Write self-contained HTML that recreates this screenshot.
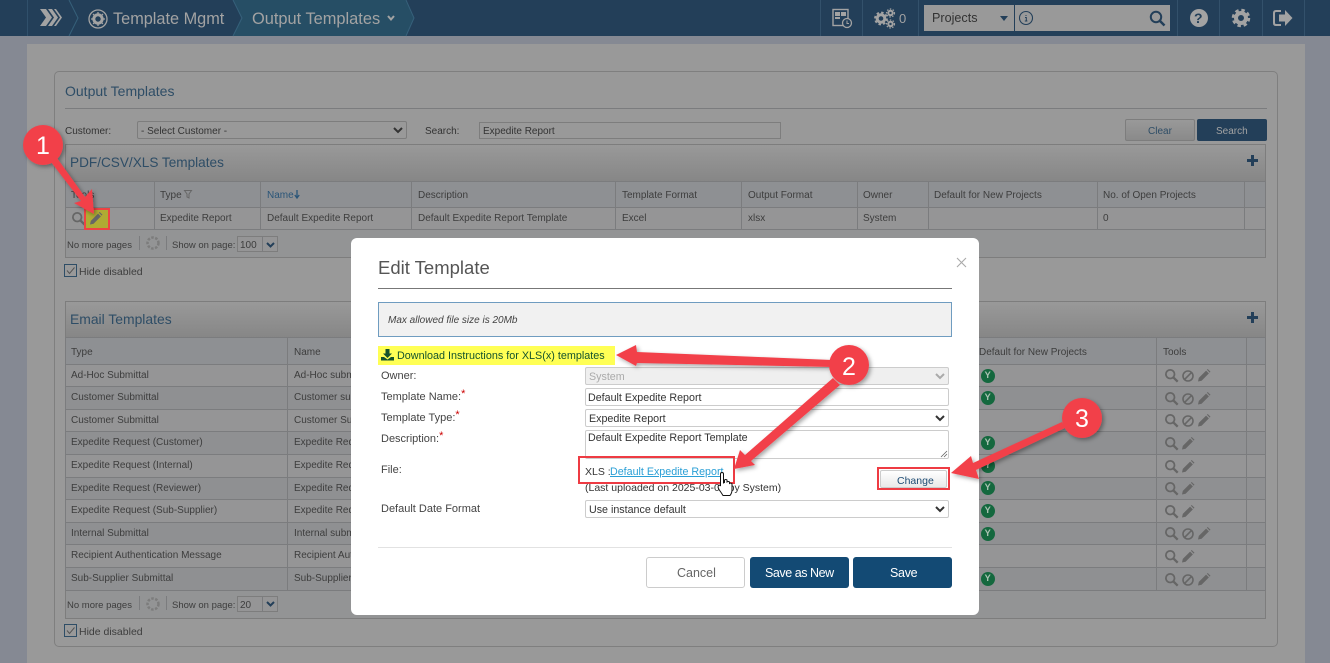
<!DOCTYPE html>
<html><head><meta charset="utf-8">
<style>
html,body{margin:0;padding:0}
body{width:1330px;height:663px;overflow:hidden;position:relative;background:#858993;font-family:"Liberation Sans",sans-serif;font-size:10px;color:#3d3d3d}
div,i,b,span.a{position:absolute;display:block;box-sizing:border-box}
i,b{font-style:normal;font-weight:normal;white-space:nowrap;line-height:14px;height:14px;margin-top:1px}
.l{background:#7b7c7e}
.m{font-size:11px;color:#444}
.inp{background:#fff;border:1px solid #ccc;border-radius:2px;font-size:10.700px;color:#333;line-height:18px;padding-left:2px;white-space:nowrap}
svg{position:absolute;overflow:visible}
</style></head><body>
<svg width="0" height="0" style="position:absolute"><defs>
<g id="mag"><circle cx="5.200" cy="5.200" r="4.300" fill="none" stroke="#666" stroke-width="1.800"/><path d="M8.400 8.400l4.300 4.300" stroke="#666" stroke-width="2.300"/></g>
<g id="ban"><circle cx="6" cy="6" r="5" fill="none" stroke="#666" stroke-width="1.600"/><path d="M2.600 9.400L9.400 2.600" stroke="#666" stroke-width="1.600"/></g>
<g id="pen"><path d="M0 12.500l.8-3.600 7.300-7.300 2.800 2.800-7.300 7.300zM8.900 .8l.8-.8 2.800 2.700-.8 .9z" fill="#666"/></g>
<g id="yb"><circle cx="7" cy="7" r="7" fill="#14683e"/></g>
<g id="caret"><path d="M1 1l4 4 4-4" fill="none" stroke="#333" stroke-width="2"/></g>
</defs></svg>

<!-- nav -->
<div style="left:0;top:0;width:1330px;height:36px;background:#233f59"></div>
<svg style="left:0;top:0" width="1330" height="36">
<polygon points="233,0 406,0 414,18 406,36 233,36 241,18" fill="#264e65"/>
<path d="M27.500 0V36" stroke="#30506b"/>
<path d="M69 0l9 18-9 18M233 0l9 18-9 18M406 0l8 18-8 18" fill="none" stroke="#36607a"/>
<path d="M40 9h6l6 8.500-6 8.500h-6l6-8.500zM48 9h4l6 8.500-6 8.500h-4l6-8.500zM54 9h2l6 8.500-6 8.500h-2l6-8.500z" fill="#a3a3a3"/>
<circle cx="98" cy="19" r="9" fill="none" stroke="#a3a3a3" stroke-width="1.300"/>
<circle cx="98" cy="19" r="4.200" fill="none" stroke="#a3a3a3" stroke-width="3"/>
<path d="M98 12v14M91 19h14M93 14l10 10M103 14l-10 10" stroke="#a3a3a3" stroke-width="1.300" stroke-dasharray="2 10"/>
<path d="M394 16l-3 3.500-3-3.500" fill="none" stroke="#a3a3a3" stroke-width="2"/>
<path d="M820.500 0V36M862.500 0V36M918.500 0V36M1177.500 0V36M1219.500 0V36M1262.500 0V36M1304.500 0V36" stroke="#33516b"/>
<rect x="833" y="9.500" width="15" height="16" fill="none" stroke="#a3a3a3" stroke-width="1.400"/>
<path d="M835 12h5v4h-5zM841 12h5v4h-5zM835 17h5v2h-5z" fill="#a3a3a3"/>
<circle cx="847" cy="23" r="4.500" fill="#233f59" stroke="#a3a3a3" stroke-width="1.300"/>
<path d="M847 20.500V23.500h2" fill="none" stroke="#a3a3a3"/>
<circle cx="881" cy="18.500" r="3.800" fill="none" stroke="#a3a3a3" stroke-width="3"/>
<circle cx="881" cy="18.500" r="6" fill="none" stroke="#a3a3a3" stroke-width="1.800" stroke-dasharray="2.500 2.200"/>
<circle cx="890.500" cy="13" r="2.200" fill="none" stroke="#a3a3a3" stroke-width="2"/>
<circle cx="890.500" cy="24" r="2.200" fill="none" stroke="#a3a3a3" stroke-width="2"/>
<circle cx="890.500" cy="13" r="4" fill="none" stroke="#a3a3a3" stroke-width="1.200" stroke-dasharray="1.500 1.500"/>
<circle cx="890.500" cy="24" r="4" fill="none" stroke="#a3a3a3" stroke-width="1.200" stroke-dasharray="1.500 1.500"/>
<circle cx="1199" cy="18" r="9" fill="#a3a3a3"/>
<circle cx="1241" cy="18" r="5" fill="none" stroke="#a3a3a3" stroke-width="4"/>
<circle cx="1241" cy="18" r="8" fill="none" stroke="#a3a3a3" stroke-width="2.500" stroke-dasharray="3.500 2.800"/>
<path d="M1281 11h-5q-2 0-2 2v10q0 2 2 2h5" fill="none" stroke="#a3a3a3" stroke-width="2"/>
<path d="M1279 14.500h6v-4.500l7.500 8-7.500 8v-4.500h-6z" fill="#a3a3a3"/>
</svg>
<i style="left:113px;top:11px;font-size:16.300px;color:#a3a3a3">Template Mgmt</i>
<i style="left:252px;top:11px;font-size:16.400px;color:#a3a3a3">Output Templates</i>
<i style="left:899px;top:11px;font-size:13px;color:#a3a3a3">0</i>
<i style="left:1194px;top:10px;font-size:14px;font-weight:bold;color:#233f59">?</i>
<div style="left:924px;top:5px;width:246px;height:26px;background:#999"></div>
<div style="left:1014px;top:5px;width:1px;height:26px;background:#233f59"></div>
<i style="left:932px;top:10px;font-size:12.600px;color:#333">Projects</i>
<svg style="left:924px;top:5px" width="246" height="26">
<path d="M76 11h8l-4 5z" fill="#233f59"/>
<circle cx="102" cy="13" r="6.500" fill="none" stroke="#233f59" stroke-width="1.100"/>
<path d="M102 10v1M101 12.500h1.300V16M100.800 16h2.600" stroke="#233f59" fill="none"/>
<circle cx="232" cy="12" r="5.200" fill="none" stroke="#233f59" stroke-width="2"/>
<path d="M236 16l4.500 4.500" stroke="#233f59" stroke-width="2.500"/>
</svg>

<!-- main panel -->
<div style="left:27px;top:44px;width:1278px;height:619px;background:#999"></div>
<div style="left:54px;top:71px;width:1224px;height:576px;border:1px solid #7f7f7f;border-radius:5px"></div>
<i style="left:65px;top:83px;font-size:14px;color:#2e4d66">Output Templates</i>
<div class="l" style="left:65px;top:108px;width:1202px;height:1px"></div>
<i style="left:65px;top:124px;color:#333">Customer:</i>
<div style="left:137px;top:121px;width:270px;height:18px;background:#999;border:1px solid #7d7d7d;border-radius:2px"></div>
<i style="left:141px;top:124px;color:#333">- Select Customer -</i>
<svg style="left:393px;top:127px" width="10" height="7"><use href="#caret"/></svg>
<i style="left:425px;top:124px;color:#333">Search:</i>
<div style="left:479px;top:122px;width:302px;height:17px;background:#999;border:1px solid #7d7d7d"></div>
<i style="left:483px;top:124px;color:#333">Expedite Report</i>
<div style="left:1125px;top:119px;width:70px;height:22px;background:linear-gradient(#999,#8a8a8a);border:1px solid #7d7d7d;border-radius:2px"></div>
<i style="left:1148px;top:124px;color:#2e4d66">Clear</i>
<div style="left:1197px;top:119px;width:70px;height:22px;background:#233f59;border-radius:2px"></div>
<i style="left:1216px;top:124px;color:#a3a3a3">Search</i>

<!-- PDF table -->
<div style="left:65px;top:144px;width:1201px;height:38px;background:linear-gradient(#999,#868686);border:1px solid #7d7d7d;border-bottom:0"></div>
<i style="left:70px;top:155px;font-size:13.600px;color:#2e4d66">PDF/CSV/XLS Templates</i>
<svg style="left:1247px;top:155px" width="11" height="11"><path d="M5.500 0v11M0 5.500h11" stroke="#233f59" stroke-width="3"/></svg>
<div style="left:65px;top:181px;width:1201px;height:26px;background:#8e9093"></div>
<div style="left:65px;top:207px;width:1201px;height:22px;background:#959596"></div>
<div style="left:65px;top:229px;width:1201px;height:29px;background:#939495;border:1px solid #7d7d7d"></div>
<div class="l" style="left:65px;top:181px;width:1201px;height:1px"></div>
<div class="l" style="left:65px;top:207px;width:1201px;height:1px"></div>
<div class="l" style="left:65px;top:229px;width:1201px;height:1px"></div>
<div class="l" style="left:65px;top:181px;width:1px;height:48px"></div>
<div class="l" style="left:154px;top:181px;width:1px;height:48px"></div>
<div class="l" style="left:260px;top:181px;width:1px;height:48px"></div>
<div class="l" style="left:411px;top:181px;width:1px;height:48px"></div>
<div class="l" style="left:615px;top:181px;width:1px;height:48px"></div>
<div class="l" style="left:741px;top:181px;width:1px;height:48px"></div>
<div class="l" style="left:857px;top:181px;width:1px;height:48px"></div>
<div class="l" style="left:928px;top:181px;width:1px;height:48px"></div>
<div class="l" style="left:1097px;top:181px;width:1px;height:48px"></div>
<div class="l" style="left:1244px;top:181px;width:1px;height:48px"></div>
<div class="l" style="left:1265px;top:181px;width:1px;height:48px"></div>
<i style="left:71px;top:188px">Tools</i>
<i style="left:160px;top:188px">Type</i>
<svg style="left:184px;top:190px" width="9" height="9"><path d="M.5 .5h7l-2.500 3.500v4l-2-1v-3z" fill="none" stroke="#666"/></svg>
<i style="left:267px;top:188px;color:#2a5578">Name</i>
<svg style="left:294px;top:190px" width="6" height="9"><path d="M3 0v7M.8 5l2.200 3 2.200-3" fill="none" stroke="#2a5578" stroke-width="1.300"/></svg>
<i style="left:418px;top:188px">Description</i>
<i style="left:622px;top:188px">Template Format</i>
<i style="left:748px;top:188px">Output Format</i>
<i style="left:863px;top:188px">Owner</i>
<i style="left:934px;top:188px">Default for New Projects</i>
<i style="left:1103px;top:188px">No. of Open Projects</i>
<i style="left:160px;top:211px">Expedite Report</i>
<i style="left:267px;top:211px">Default Expedite Report</i>
<i style="left:418px;top:211px">Default Expedite Report Template</i>
<i style="left:622px;top:211px">Excel</i>
<i style="left:748px;top:211px">xlsx</i>
<i style="left:863px;top:211px">System</i>
<i style="left:1103px;top:211px">0</i>
<svg style="left:72px;top:212px" width="13" height="13"><use href="#mag"/></svg>
<div style="left:84px;top:208px;width:26px;height:22px;background:#b0ab33;border:2px solid #ee4343"></div>
<svg style="left:90px;top:212px" width="13" height="13"><use href="#pen"/></svg>
<i style="left:67px;top:238px;font-size:9.500px">No more pages</i>
<div class="l" style="left:139px;top:236px;width:1px;height:14px"></div>
<svg style="left:146px;top:236px" width="14" height="14"><circle cx="7" cy="7" r="5.500" fill="none" stroke="#7c7c7c" stroke-width="2.500" stroke-dasharray="2.500 1.500"/></svg>
<div class="l" style="left:166px;top:236px;width:1px;height:14px"></div>
<i style="left:172px;top:238px;font-size:9.500px">Show on page:</i>
<div style="left:237px;top:236px;width:41px;height:16px;border:1px solid #7d7d7d;background:#959596"></div>
<div class="l" style="left:262px;top:236px;width:1px;height:16px"></div>
<i style="left:240px;top:238px">100</i>
<svg style="left:266px;top:242px" width="10" height="6"><path d="M1 1l3.500 3.500L8 1" fill="none" stroke="#233f59" stroke-width="2"/></svg>
<div style="left:64px;top:264px;width:13px;height:13px;border:1px solid #2e4d66"></div>
<svg style="left:64px;top:264px" width="13" height="13"><path d="M3 6.500l2.500 3 5-6" fill="none" stroke="#555"/></svg>
<i style="left:79px;top:264px;font-size:10.500px">Hide disabled</i>

<!-- Email table -->
<div style="left:65px;top:301px;width:1201px;height:37px;background:linear-gradient(#999,#868686);border:1px solid #7d7d7d;border-bottom:0"></div>
<i style="left:70px;top:311px;font-size:13.900px;color:#2e4d66">Email Templates</i>
<svg style="left:1247px;top:312px" width="11" height="11"><path d="M5.500 0v11M0 5.500h11" stroke="#233f59" stroke-width="3"/></svg>
<div style="left:65px;top:337px;width:1201px;height:28px;background:#8e9093"></div>
<div style="left:65px;top:365px;width:1201px;height:22px;background:#959596"></div>
<div style="left:65px;top:387px;width:1201px;height:22px;background:#8f9092"></div>
<div style="left:65px;top:409px;width:1201px;height:22px;background:#959596"></div>
<div style="left:65px;top:431px;width:1201px;height:23px;background:#8f9092"></div>
<div style="left:65px;top:454px;width:1201px;height:23px;background:#959596"></div>
<div style="left:65px;top:477px;width:1201px;height:23px;background:#8f9092"></div>
<div style="left:65px;top:500px;width:1201px;height:22px;background:#959596"></div>
<div style="left:65px;top:522px;width:1201px;height:23px;background:#8f9092"></div>
<div style="left:65px;top:545px;width:1201px;height:22px;background:#959596"></div>
<div style="left:65px;top:567px;width:1201px;height:23px;background:#8f9092"></div>
<div style="left:65px;top:590px;width:1201px;height:29px;background:#939495;border:1px solid #7d7d7d"></div>
<div class="l" style="left:65px;top:337px;width:1201px;height:1px"></div>
<div class="l" style="left:65px;top:364px;width:1201px;height:1px"></div>
<div class="l" style="left:65px;top:386px;width:1201px;height:1px"></div>
<div class="l" style="left:65px;top:409px;width:1201px;height:1px"></div>
<div class="l" style="left:65px;top:431px;width:1201px;height:1px"></div>
<div class="l" style="left:65px;top:454px;width:1201px;height:1px"></div>
<div class="l" style="left:65px;top:477px;width:1201px;height:1px"></div>
<div class="l" style="left:65px;top:499px;width:1201px;height:1px"></div>
<div class="l" style="left:65px;top:522px;width:1201px;height:1px"></div>
<div class="l" style="left:65px;top:544px;width:1201px;height:1px"></div>
<div class="l" style="left:65px;top:567px;width:1201px;height:1px"></div>
<div class="l" style="left:65px;top:590px;width:1201px;height:1px"></div>
<div class="l" style="left:65px;top:337px;width:1px;height:253px"></div>
<div class="l" style="left:287px;top:337px;width:1px;height:253px"></div>
<div class="l" style="left:1156px;top:337px;width:1px;height:253px"></div>
<div class="l" style="left:1246px;top:337px;width:1px;height:253px"></div>
<div class="l" style="left:1265px;top:337px;width:1px;height:253px"></div>
<i style="left:71px;top:345px">Type</i><i style="left:294px;top:345px">Name</i>
<i style="left:979px;top:345px">Default for New Projects</i><i style="left:1163px;top:345px">Tools</i>
<i style="left:71px;top:368px">Ad-Hoc Submittal</i><i style="left:294px;top:368px">Ad-Hoc submittal</i>
<i style="left:71px;top:390px">Customer Submittal</i><i style="left:294px;top:390px">Customer submittal</i>
<i style="left:71px;top:413px">Customer Submittal</i><i style="left:294px;top:413px">Customer Submittal</i>
<i style="left:71px;top:435px">Expedite Request (Customer)</i><i style="left:294px;top:435px">Expedite Request</i>
<i style="left:71px;top:458px">Expedite Request (Internal)</i><i style="left:294px;top:458px">Expedite Request</i>
<i style="left:71px;top:481px">Expedite Request (Reviewer)</i><i style="left:294px;top:481px">Expedite Request</i>
<i style="left:71px;top:503px">Expedite Request (Sub-Supplier)</i><i style="left:294px;top:503px">Expedite Request</i>
<i style="left:71px;top:526px">Internal Submittal</i><i style="left:294px;top:526px">Internal submittal</i>
<i style="left:71px;top:548px">Recipient Authentication Message</i><i style="left:294px;top:548px">Recipient Authentication</i>
<i style="left:71px;top:571px">Sub-Supplier Submittal</i><i style="left:294px;top:571px">Sub-Supplier Submittal</i>
<svg style="left:0;top:0" width="1330" height="663">
<use href="#yb" x="981" y="369"/><use href="#yb" x="981" y="391"/><use href="#yb" x="981" y="436"/><use href="#yb" x="981" y="459"/><use href="#yb" x="981" y="481"/><use href="#yb" x="981" y="504"/><use href="#yb" x="981" y="527"/><use href="#yb" x="981" y="572"/>
<use href="#mag" x="1165" y="369"/><use href="#ban" x="1182" y="370"/><use href="#pen" x="1198" y="369"/>
<use href="#mag" x="1165" y="392"/><use href="#ban" x="1182" y="393"/><use href="#pen" x="1198" y="392"/>
<use href="#mag" x="1165" y="414"/><use href="#ban" x="1182" y="415"/><use href="#pen" x="1198" y="414"/>
<use href="#mag" x="1165" y="437"/><use href="#pen" x="1182" y="437"/>
<use href="#mag" x="1165" y="460"/><use href="#pen" x="1182" y="460"/>
<use href="#mag" x="1165" y="482"/><use href="#pen" x="1182" y="482"/>
<use href="#mag" x="1165" y="505"/><use href="#pen" x="1182" y="505"/>
<use href="#mag" x="1165" y="527"/><use href="#ban" x="1182" y="528"/><use href="#pen" x="1198" y="527"/>
<use href="#mag" x="1165" y="550"/><use href="#pen" x="1182" y="550"/>
<use href="#mag" x="1165" y="573"/><use href="#ban" x="1182" y="574"/><use href="#pen" x="1198" y="573"/>
</svg>
<i style="left:984.500px;top:368px;font-size:9.500px;font-weight:bold;color:#a9c2b2">Y</i>
<i style="left:984.500px;top:390px;font-size:9.500px;font-weight:bold;color:#a9c2b2">Y</i>
<i style="left:984.500px;top:435px;font-size:9.500px;font-weight:bold;color:#a9c2b2">Y</i>
<i style="left:984.500px;top:458px;font-size:9.500px;font-weight:bold;color:#a9c2b2">Y</i>
<i style="left:984.500px;top:480px;font-size:9.500px;font-weight:bold;color:#a9c2b2">Y</i>
<i style="left:984.500px;top:503px;font-size:9.500px;font-weight:bold;color:#a9c2b2">Y</i>
<i style="left:984.500px;top:526px;font-size:9.500px;font-weight:bold;color:#a9c2b2">Y</i>
<i style="left:984.500px;top:571px;font-size:9.500px;font-weight:bold;color:#a9c2b2">Y</i>
<i style="left:67px;top:598px;font-size:9.500px">No more pages</i>
<div class="l" style="left:139px;top:596px;width:1px;height:14px"></div>
<svg style="left:146px;top:597px" width="14" height="14"><circle cx="7" cy="7" r="5.500" fill="none" stroke="#7c7c7c" stroke-width="2.500" stroke-dasharray="2.500 1.500"/></svg>
<div class="l" style="left:166px;top:596px;width:1px;height:14px"></div>
<i style="left:172px;top:598px;font-size:9.500px">Show on page:</i>
<div style="left:237px;top:596px;width:41px;height:16px;border:1px solid #7d7d7d;background:#959596"></div>
<div class="l" style="left:262px;top:596px;width:1px;height:16px"></div>
<i style="left:240px;top:598px">20</i>
<svg style="left:266px;top:601px" width="10" height="6"><path d="M1 1l3.500 3.500L8 1" fill="none" stroke="#233f59" stroke-width="2"/></svg>
<div style="left:64px;top:624px;width:13px;height:13px;border:1px solid #2e4d66"></div>
<svg style="left:64px;top:624px" width="13" height="13"><path d="M3 6.500l2.500 3 5-6" fill="none" stroke="#555"/></svg>
<i style="left:79px;top:624px;font-size:10.500px">Hide disabled</i>

<!-- modal -->
<div style="left:351px;top:238px;width:628px;height:377px;background:#fff;border-radius:6px"></div>
<i style="left:378px;top:257px;font-size:18.500px;line-height:20px;height:20px;color:#555">Edit Template</i>
<svg style="left:956px;top:257px" width="11" height="11"><path d="M1 1l9 9M10 1l-9 9" stroke="#aaa" stroke-width="1.100"/></svg>
<div style="left:378px;top:288px;width:574px;height:1px;background:#777"></div>
<div style="left:378px;top:302px;width:574px;height:35px;background:#f1f1f1;border:1px solid #6f9cc0"></div>
<i style="left:388px;top:313px;font-size:10px;font-style:italic;color:#444">Max allowed file size is 20Mb</i>
<div style="left:378px;top:346px;width:237px;height:19px;background:#ffff55"></div>
<svg style="left:381px;top:349px" width="13" height="12"><path d="M4.500 0h4v4.500H11L6.500 9 2 4.500h2.500zM0 8h3l3.500 2.500L10 8h3v3.500H0z" fill="#14532d"/></svg>
<i style="left:397px;top:348px;font-size:10.800px;color:#14532d">Download Instructions for XLS(x) templates</i>
<i class="m" style="left:381px;top:368px">Owner:</i>
<i class="m" style="left:381px;top:389px">Template Name:<span style="color:#c00;position:relative;top:-3px">*</span></i>
<i class="m" style="left:381px;top:410px">Template Type:<span style="color:#c00;position:relative;top:-3px">*</span></i>
<i class="m" style="left:381px;top:431px">Description:<span style="color:#c00;position:relative;top:-3px">*</span></i>
<i class="m" style="left:381px;top:462px">File:</i>
<i class="m" style="left:381px;top:501px">Default Date Format</i>
<div class="inp" style="left:585px;top:367px;width:364px;height:18px;background:#efefef;color:#aaa;padding-left:3px">System</div>
<div class="inp" style="left:585px;top:388px;width:364px;height:18px">Default Expedite Report</div>
<div class="inp" style="left:585px;top:409px;width:364px;height:18px;padding-left:3px">Expedite Report</div>
<div class="inp" style="left:585px;top:430px;width:364px;height:29px;line-height:15px">Default Expedite Report Template</div>
<div class="inp" style="left:585px;top:500px;width:364px;height:18px;padding-left:3px">Use instance default</div>
<svg style="left:935px;top:373px" width="10" height="7"><path d="M1 1l4 4 4-4" fill="none" stroke="#aaa" stroke-width="2"/></svg>
<svg style="left:935px;top:415px" width="10" height="7"><use href="#caret"/></svg>
<svg style="left:935px;top:506px" width="10" height="7"><use href="#caret"/></svg>
<svg style="left:940px;top:450px" width="8" height="8"><path d="M1 7l6-6M4 7l3-3" stroke="#666" stroke-width=".8"/></svg>
<i style="left:585px;top:464px;font-size:10.500px;color:#333">XLS :</i>
<i style="left:610px;top:464px;font-size:10.700px;color:#2a9fd6;text-decoration:underline">Default Expedite Report</i>
<i style="left:585px;top:480px;font-size:10.500px;color:#333">(Last uploaded on 2025-03-04 by System)</i>
<div style="left:578px;top:456px;width:157px;height:28px;border:2px solid #ee3b43"></div>
<svg style="left:717px;top:472px" width="18" height="26"><path d="M3.500 2q0-1.500 1.500-1.500T6.500 2v9l1-.5V8q1.300-1 2.500 0v2q1.300-1 2.500 0v1.500q1.300-.8 2.500.3V18q0 3-2 5.500H6Q4.500 21 2 17.500 .5 15 1.500 13.500q1.200-1 2 .5z" fill="#fff" stroke="#111"/></svg>
<div style="left:877px;top:467px;width:73px;height:23px;border:2px solid #ee3b43"></div>
<div style="left:880px;top:470px;width:67px;height:18px;background:linear-gradient(#fff,#e9e9e9);border:1px solid #ccc;border-radius:2px"></div>
<i style="left:897px;top:473px;font-size:10.500px;color:#1d4b73">Change</i>
<div style="left:378px;top:547px;width:574px;height:1px;background:#e2e2e2"></div>
<div style="left:646px;top:557px;width:99px;height:31px;background:#fff;border:1px solid #ccc;border-radius:3px"></div>
<i style="left:677px;top:565px;font-size:12.500px;color:#666">Cancel</i>
<div style="left:750px;top:557px;width:99px;height:31px;background:#134a74;border-radius:3px"></div>
<i style="left:765px;top:565px;font-size:12.500px;letter-spacing:-.45px;color:#fff">Save as New</i>
<div style="left:853px;top:557px;width:99px;height:31px;background:#134a74;border-radius:3px"></div>
<i style="left:890px;top:565px;font-size:12.500px;letter-spacing:-.3px;color:#fff">Save</i>

<!-- annotations -->
<svg style="left:0;top:0" width="1330" height="663">
<defs><filter id="sh" x="-20%" y="-20%" width="140%" height="140%"><feDropShadow dx="2" dy="2" stdDeviation="2" flood-color="#000" flood-opacity=".35"/></filter></defs>
<g fill="#f2404a" filter="url(#sh)">
<polygon points="51,162 57,158 85,197 92,189 94,214 74,203 81,201"/>
<polygon points="616,355 636,345 637,352 832,360 832,367 637,363 636,366"/>
<polygon points="734,469 740,450 745,455 833,378 840,385 751,461 755,465"/>
<polygon points="951,473 971,456 973,463 1062,422 1065,428 976,470 979,479"/>
<circle cx="43" cy="145" r="20"/><circle cx="849" cy="365" r="20"/><circle cx="1082" cy="418" r="20"/>
</g>
</svg>
<i style="left:36px;top:132px;height:26px;line-height:26px;font-size:25px;color:#fff">1</i>
<i style="left:842px;top:353px;height:26px;line-height:26px;font-size:25px;color:#fff">2</i>
<i style="left:1075px;top:405px;height:26px;line-height:26px;font-size:25px;color:#fff">3</i>
</body></html>
